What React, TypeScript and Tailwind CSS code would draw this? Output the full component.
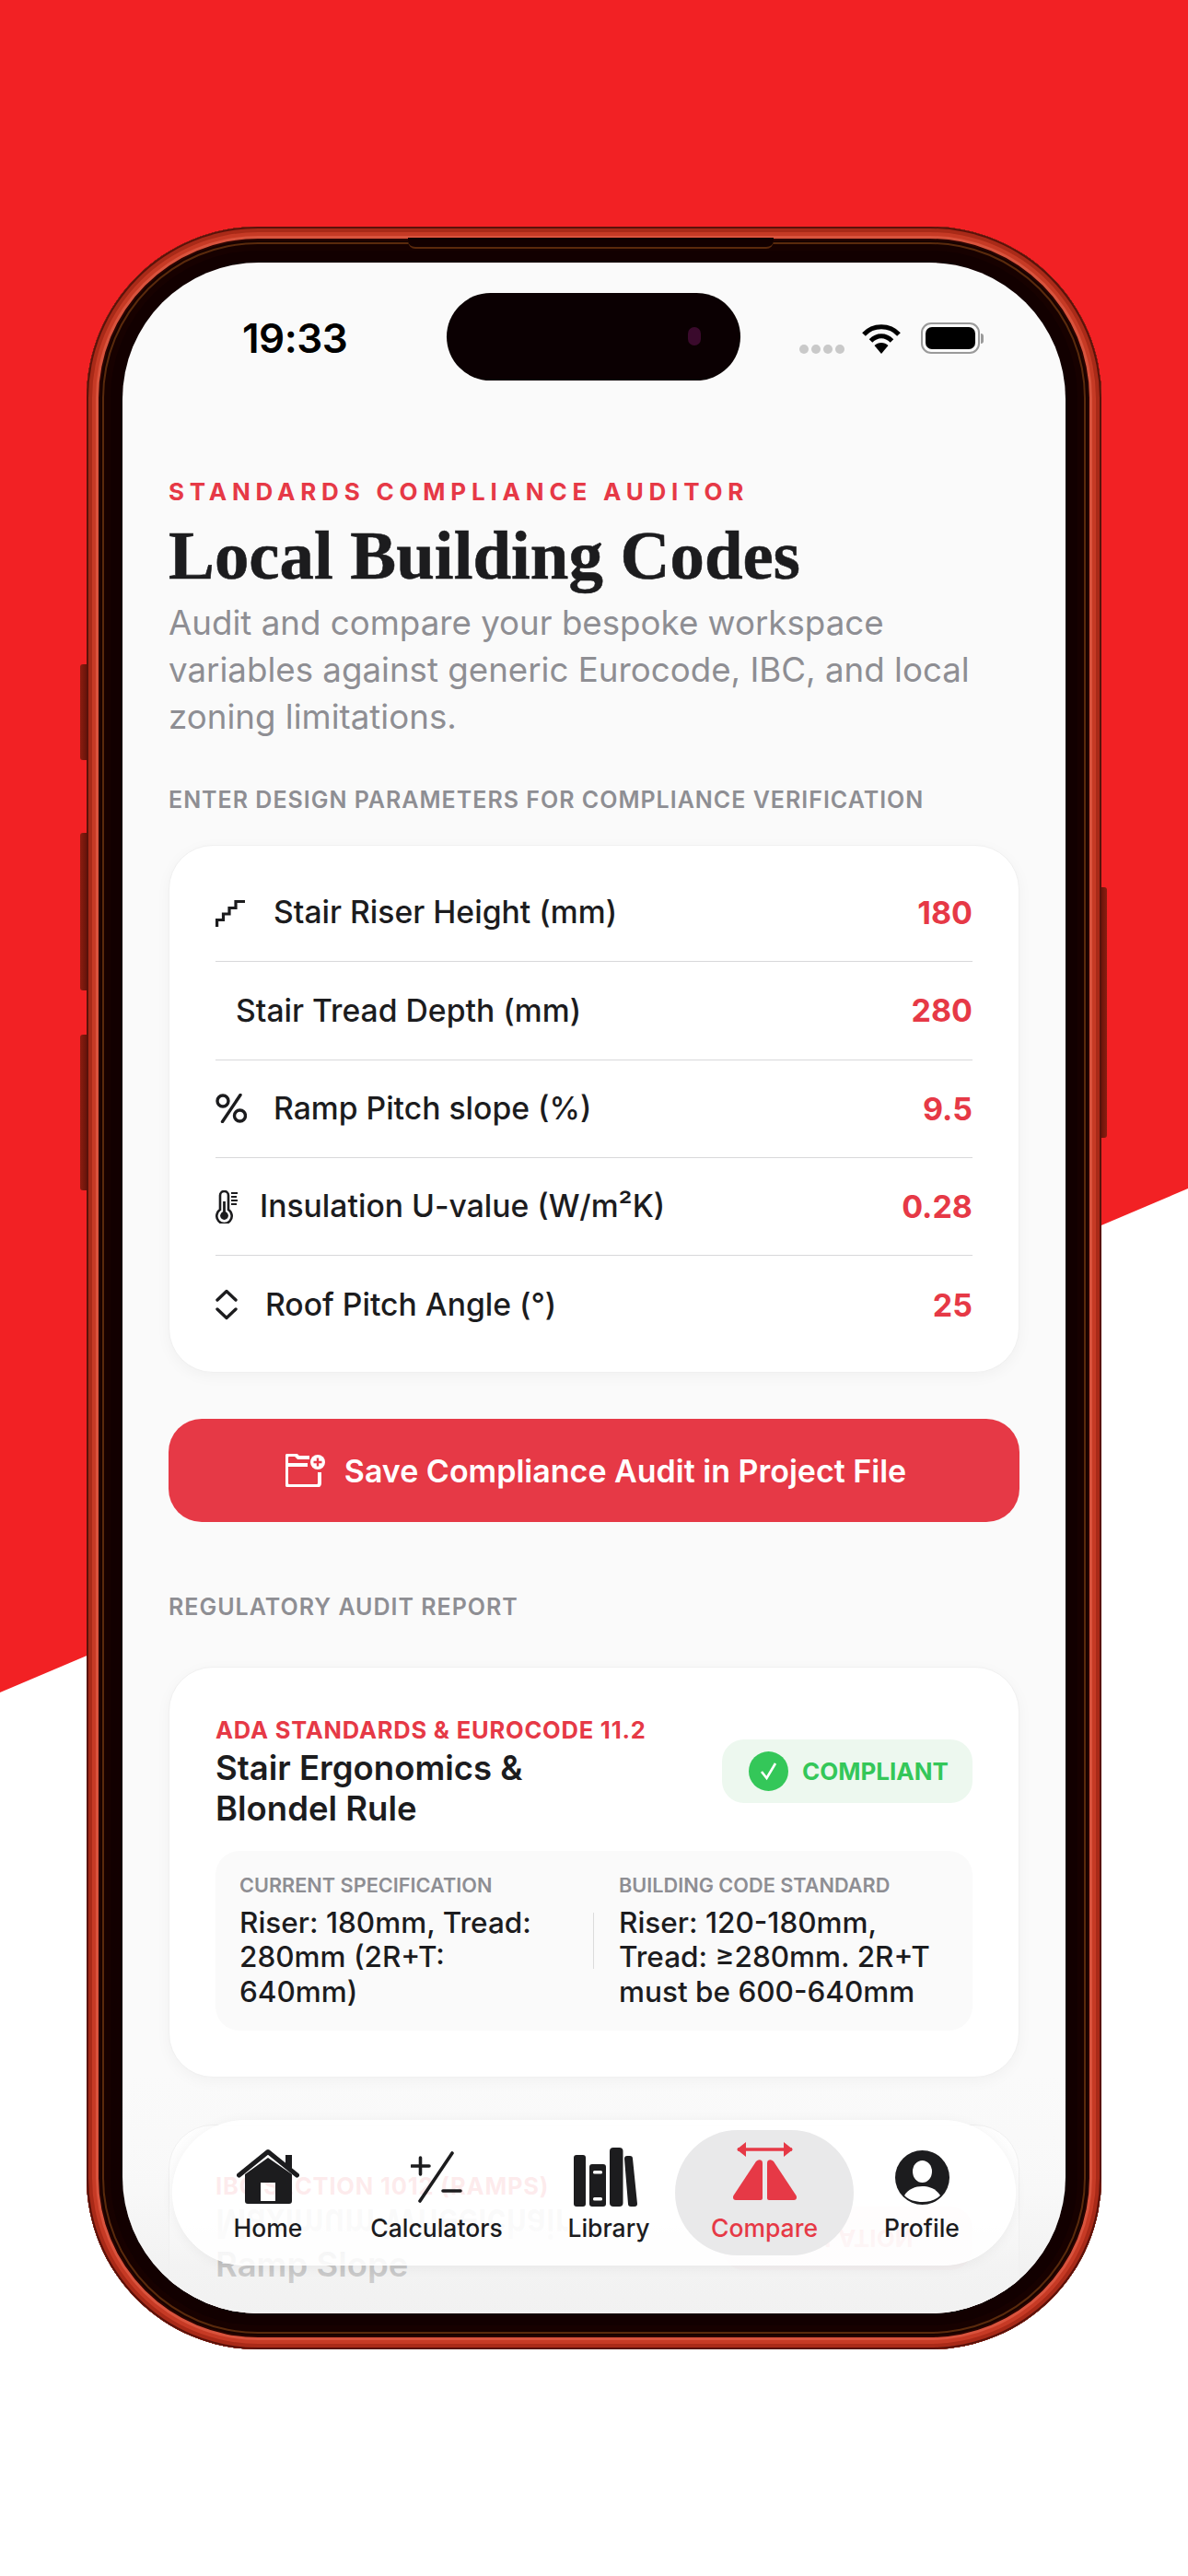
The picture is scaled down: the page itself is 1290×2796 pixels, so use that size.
import type { ReactNode } from "react";

const sans = "font-['Inter','Liberation_Sans',sans-serif]";

const params: { label: string; value: string; gap: string; icon: ReactNode }[] = [
  {
    label: "Stair Riser Height (mm)",
    value: "180",
    gap: "gap-[31px]",
    icon: (
      <svg width="32" height="32" viewBox="0 0 32 32" fill="none" stroke="#1c1c1e" strokeWidth="3.2">
        <path d="M1.6 31V23.5H8.5V17H15V10.5H22V3.5H32" />
      </svg>
    ),
  },
  { label: "Stair Tread Depth (mm)", value: "280", gap: "gap-[22px]", icon: <span /> },
  {
    label: "Ramp Pitch slope (%)",
    value: "9.5",
    gap: "gap-[29px]",
    icon: (
      <svg width="34" height="32" viewBox="0 0 34 32" fill="none" stroke="#1c1c1e" strokeWidth="3.4">
        <circle cx="8" cy="8" r="6" />
        <circle cx="26.5" cy="24" r="6" />
        <path d="M27 1.5 7.500 30.500" strokeLinecap="round" />
      </svg>
    ),
  },
  {
    label: "Insulation U-value (W/m²K)",
    value: "0.28",
    gap: "gap-[24px]",
    icon: (
      <svg width="24" height="36" viewBox="0 0 24 36" fill="none" stroke="#1c1c1e" strokeWidth="2.6">
        <path d="M5 21V5.500a4.500 4.500 0 0 1 9 0V21a8.200 8.200 0 1 1-9 0Z" />
        <circle cx="9.500" cy="27.500" r="4.400" fill="#1c1c1e" stroke="none" />
        <path d="M9.500 12v14" strokeWidth="2.800" />
        <path d="M17 3h7M17 7h6M17 11h7M17 15h6" strokeWidth="1.800" />
      </svg>
    ),
  },
  {
    label: "Roof Pitch Angle (°)",
    value: "25",
    gap: "gap-[30px]",
    icon: (
      <svg width="24" height="34" viewBox="0 0 24 34" fill="none" stroke="#1c1c1e" strokeWidth="3.4" strokeLinecap="round" strokeLinejoin="round">
        <path d="M2 12 12 2.500 22 12M2 22l10 9.500L22 22" />
      </svg>
    ),
  },
];

function HomeIcon() {
  return (
    <svg width="68" height="62" viewBox="0 0 68 62">
      <path d="M53 7h7v15l-7-5Z" fill="#1c1c1e" />
      <path d="M2.500 29 34 3.500 65.500 29" fill="none" stroke="#1c1c1e" strokeWidth="5" strokeLinecap="round" strokeLinejoin="round" />
      <path fillRule="evenodd" d="M9 28 34 10l26 18v29a3 3 0 0 1-3 3H12a3 3 0 0 1-3-3ZM26 37v20h16V37Z" fill="#1c1c1e" />
    </svg>
  );
}

function CalcIcon() {
  return (
    <svg width="56" height="58" viewBox="0 0 56 58" fill="none" stroke="#1c1c1e" strokeWidth="3.6" strokeLinecap="round">
      <path d="M1 17h19M10.500 8v18M45 3 10 55M35 44h19" />
    </svg>
  );
}

function LibraryIcon() {
  return (
    <svg className="-ml-[7px]" width="69" height="64" viewBox="0 0 69 64">
      <rect x="0" y="8" width="13" height="56" rx="3" fill="#1c1c1e" />
      <rect x="17" y="18" width="18" height="46" rx="3" fill="#1c1c1e" />
      <rect x="21" y="25" width="10" height="3.500" rx="1.500" fill="#ffffff" />
      <rect x="21" y="54" width="10" height="3.500" rx="1.500" fill="#ffffff" />
      <rect x="39" y="0" width="14.500" height="64" rx="4" fill="#1c1c1e" />
      <path d="M55 12a3 3 0 0 1 3-3h3a3 3 0 0 1 3 3l5 49a3 3 0 0 1-3 3h-4a3 3 0 0 1-3-3Z" fill="#1c1c1e" />
    </svg>
  );
}

function CompareIcon() {
  return (
    <svg className="-mt-[12px]" width="69" height="64" viewBox="0 0 69 64" fill="#e63946">
      <path d="M5 8h59" stroke="#e63946" strokeWidth="3.600" />
      <path d="M4 8 14 0v16ZM65 8 55 0v16Z" strokeLinejoin="round" />
      <path d="M25 21q3-3 6-1 1 1 1 3v38q0 2-2 2H3q-3 0-3-3 0-1 .5-2Z" />
      <path d="M44 21q-3-3-6-1-1 1-1 3v38q0 2 2 2h27q3 0 3-3 0-1-.5-2Z" />
    </svg>
  );
}

function ProfileIcon() {
  return (
    <svg width="59" height="59" viewBox="0 0 59 59">
      <circle cx="29.500" cy="29.500" r="29.500" fill="#1c1c1e" />
      <ellipse cx="29.500" cy="23" rx="10.500" ry="12" fill="#ffffff" />
      <path d="M10 49c4-7 12-10 19.500-10S45 42 49 49c-5 5-12 7-19.500 7S15 54 10 49Z" fill="#ffffff" />
    </svg>
  );
}

const tabs: { label: string; width: string; icon: ReactNode; active?: boolean }[] = [
  { label: "Home", width: "w-[136px]", icon: <HomeIcon /> },
  { label: "Calculators", width: "w-[230px]", icon: <CalcIcon /> },
  { label: "Library", width: "w-[144px]", icon: <LibraryIcon /> },
  { label: "Compare", width: "w-[194px]", icon: <CompareIcon />, active: true },
  { label: "Profile", width: "w-[148px]", icon: <ProfileIcon /> },
];

function StatusBar() {
  return (
    <div className="flex items-center justify-between h-[40px] mt-[62px] pl-[130px] pr-[89px]">
      <span className={`${sans} text-[44px] leading-[40px] font-semibold tracking-[-0.5px] text-black`}>19:33</span>
      <div className="flex items-center">
        <div className="flex gap-[3px] mt-[24px]">
          <span className="w-[10px] h-[10px] rounded-full bg-[#c9c9c9]" />
          <span className="w-[10px] h-[10px] rounded-full bg-[#c9c9c9]" />
          <span className="w-[10px] h-[10px] rounded-full bg-[#c9c9c9]" />
          <span className="w-[10px] h-[10px] rounded-full bg-[#c9c9c9]" />
        </div>
        <svg className="ml-[19px]" width="42" height="33" viewBox="0 0 42 33" fill="none" stroke="#000" strokeWidth="5">
          <path d="M2 12C12 1 30 1 40 12" />
          <path d="M9.500 19c7-7 16-7 23 0" />
          <path d="M21 33 13.500 24c4-4 11-4 15 0Z" fill="#000" stroke="none" />
        </svg>
        <div className="flex items-center ml-[22px]">
          <div className="w-[64px] h-[34px] rounded-[11px] border-2 border-[#9a9a9a] p-[3px]">
            <div className="w-full h-full rounded-[7px] bg-black" />
          </div>
          <span className="w-[3px] h-[11px] ml-[1px] rounded-r-full bg-[#9a9a9a]" />
        </div>
      </div>
    </div>
  );
}

function BottomNav() {
  return (
    <div className="absolute left-[54px] top-[2016px] w-[916px] h-[158px] rounded-[79px] bg-white/88 border border-white shadow-[0_2px_14px_rgba(0,0,0,0.05)] flex pl-[35px] pt-[10px] z-20">
      {tabs.map((tab) => (
        <div
          key={tab.label}
          className={`${tab.width} relative h-[136px] flex flex-col items-center pt-[18px] ${tab.active ? "rounded-[72px] bg-[#e9e9ea]" : ""}`}
        >
          <div className="h-[66px] flex items-center justify-center">{tab.icon}</div>
          <span className={`${sans} mt-[6px] text-[26.5px] leading-[32px] font-medium ${tab.active ? "text-[#e63946]" : "text-[#1c1c1e]"}`}>
            {tab.label}
          </span>
        </div>
      ))}
    </div>
  );
}

export default function App() {
  return (
    <div className="relative w-[1290px] h-[2796px] overflow-hidden bg-white">
      <div className="absolute inset-0 bg-[#f22124] [clip-path:polygon(0_0,100%_0,100%_1290px,0_1837px)]" />

      {/* Side buttons */}
      <div className="absolute left-[87px] top-[721px] w-[10px] h-[104px] rounded-l-[3px] bg-linear-to-r from-[#8c1d10] to-[#5a0f08]" />
      <div className="absolute left-[87px] top-[904px] w-[10px] h-[171px] rounded-l-[3px] bg-linear-to-r from-[#8c1d10] to-[#5a0f08]" />
      <div className="absolute left-[87px] top-[1123px] w-[10px] h-[169px] rounded-l-[3px] bg-linear-to-r from-[#8c1d10] to-[#5a0f08]" />
      <div className="absolute left-[1192px] top-[963px] w-[10px] h-[272px] rounded-r-[3px] bg-linear-to-l from-[#8c1d10] to-[#5a0f08]" />

      {/* Phone */}
      <div className="relative ml-[94px] mt-[246px] w-[1102px] h-[2304px] p-[39px] rounded-[186px] bg-[#120000] shadow-[inset_0_0_0_2px_#5a120a,inset_0_0_0_6px_#a92a18,inset_0_0_0_10px_#c63a25,inset_0_0_0_13px_#d9533d,inset_0_0_0_15px_#2a0500,inset_0_0_0_17px_#170200,inset_0_0_0_19px_#5a2a0c,inset_0_0_0_26px_#170100]">
        <div className="absolute left-[349px] top-[12px] w-[397px] h-[12px] rounded-b-[8px] bg-[#120000] border-b-2 border-[#5a2a0c]" />

        <div className="relative w-[1024px] h-[2226px] rounded-[148px] overflow-hidden bg-[#fafafa]">
          <div className="absolute left-[352px] top-[33px] w-[319px] h-[95px] rounded-full bg-[#0b0002] z-10">
            <span className="absolute left-[262px] top-[37px] w-[14px] h-[20px] rounded-full bg-[#3a0a2c]" />
          </div>

          <StatusBar />

          <div className={`${sans} px-[50px]`}>
            <p className="mt-[132px] text-[26px] leading-[30px] font-bold tracking-[5.8px] text-[#e63946] whitespace-nowrap">
              STANDARDS COMPLIANCE AUDITOR
            </p>
            <h1 className="mt-[14px] font-['Liberation_Serif',serif] text-[74.8px] leading-[80px] font-bold text-[#1c1c1e] [-webkit-text-stroke:0.6px_#1c1c1e]">
              Local Building Codes
            </h1>
            <p className="mt-[7px] text-[36.7px] leading-[51px] text-[#8e8e93]">
              Audit and compare your bespoke workspace variables against generic Eurocode, IBC, and local zoning limitations.
            </p>

            <p className="mt-[50px] text-[25px] leading-[30px] font-semibold tracking-[1px] text-[#8e8e93] whitespace-nowrap">
              ENTER DESIGN PARAMETERS FOR COMPLIANCE VERIFICATION
            </p>

            {/* Parameters card */}
            <div className="mt-[34px] pt-[20px] pb-[20px] px-[50px] rounded-[48px] bg-white border border-[#f0f0f0] shadow-[0_4px_16px_rgba(0,0,0,0.04)]">
              {params.map((row, i) => (
                <div
                  key={row.label}
                  className={`flex items-center justify-between h-[106.3px] ${i < params.length - 1 ? "border-b border-[#d8d8da]" : ""}`}
                >
                  <div className={`flex items-center ${row.gap}`}>
                    {row.icon}
                    <span className="text-[33.7px] font-medium text-[#1c1c1e]">{row.label}</span>
                  </div>
                  <span className="text-[34px] font-bold text-[#e63946]">{row.value}</span>
                </div>
              ))}
            </div>

            <button className="mt-[50px] w-full h-[112px] pl-[4px] rounded-[36px] bg-[#e63946] flex items-center justify-center gap-[20px] text-[34px] font-semibold text-white">
              <svg width="44" height="36" viewBox="0 0 44 36" fill="none" stroke="#fff" strokeWidth="4" strokeLinejoin="round">
                <path d="M26 4H14l-3-3H4a3 3 0 0 0-3 3v28a3 3 0 0 0 3 3h30a3 3 0 0 0 3-3V20" />
                <path d="M2 12h22" />
                <circle cx="35" cy="9" r="8" fill="#fff" stroke="none" />
                <path d="M35 4.500v9M30.500 9h9" stroke="#e63946" strokeWidth="2.400" />
              </svg>
              Save Compliance Audit in Project File
            </button>

            <p className="mt-[77px] text-[25px] leading-[30px] font-semibold tracking-[1px] text-[#8e8e93]">
              REGULATORY AUDIT REPORT
            </p>

            {/* Stair card */}
            <div className="mt-[50px] pt-[53px] pb-[50px] px-[50px] rounded-[48px] bg-white border border-[#f0f0f0] shadow-[0_4px_16px_rgba(0,0,0,0.04)]">
              <div className="flex items-center justify-between">
                <div>
                  <p className="text-[25.5px] leading-[30px] font-bold tracking-[0.8px] text-[#e63946]">ADA STANDARDS &amp; EUROCODE 11.2</p>
                  <p className="mt-[4px] text-[36.5px] leading-[44px] font-semibold text-[#1c1c1e]">
                    Stair Ergonomics &amp;
                    <br />
                    Blondel Rule
                  </p>
                </div>
                <div className="flex items-center gap-[15px] w-[272px] h-[69px] -mt-[3px] pl-[29px] rounded-[24px] bg-[#edf8ef]">
                  <svg width="43" height="43" viewBox="0 0 43 43">
                    <circle cx="21.500" cy="21.500" r="21.500" fill="#34c759" />
                    <path d="m14 22 5.500 7L29 13" fill="none" stroke="#fff" strokeWidth="2.600" />
                  </svg>
                  <span className="text-[26px] font-bold text-[#34c759]">COMPLIANT</span>
                </div>
              </div>

              <div className="mt-[24px] flex items-center h-[195px] pl-[26px] rounded-[26px] bg-[#fafafa]">
                <div className="w-[340px] mr-[20px]">
                  <p className="text-[21.7px] leading-[24px] font-semibold text-[#8e8e93] whitespace-nowrap">CURRENT SPECIFICATION</p>
                  <p className="mt-[10px] text-[31.5px] leading-[37.5px] font-medium text-[#1c1c1e]">
                    Riser: 180mm, Tread: 280mm (2R+T: 640mm)
                  </p>
                </div>
                <div className="w-px h-[61px] ml-[24px] bg-[#dcdcdc]" />
                <div className="w-[360px] ml-[27px]">
                  <p className="text-[21.7px] leading-[24px] font-semibold text-[#8e8e93] whitespace-nowrap">BUILDING CODE STANDARD</p>
                  <p className="mt-[10px] text-[31.5px] leading-[37.5px] font-medium text-[#1c1c1e]">
                    Riser: 120-180mm, Tread: ≥280mm. 2R+T must be 600-640mm
                  </p>
                </div>
              </div>
            </div>

            {/* Ramp card, runs under the tab bar */}
            <div className="mt-[51px] h-[420px] pt-[51px] px-[50px] rounded-[48px] bg-white border border-[#f0f0f0]">
              <div className="flex items-center justify-between">
                <div>
                  <p className="text-[25.5px] leading-[30px] font-bold tracking-[0.8px] text-[#e63946]">IBC SECTION 1012 (RAMPS)</p>
                  <p className="mt-[4px] text-[36.5px] leading-[44px] font-semibold text-[#1c1c1e]">
                    <span className="block origin-center text-[#1c1c1e]/30 [transform:scaleY(-1.2)]">Maximum Wheelchair</span>
                    Ramp Slope
                  </p>
                </div>
                <div className="flex items-center justify-center w-[272px] h-[69px] mt-[20px] rounded-[24px] bg-[#fdecee]">
                  <span className="block text-[26px] font-bold text-[#e63946] [transform:scaleY(-1)]">VIOLATION</span>
                </div>
              </div>
            </div>
          </div>

          <div className="absolute inset-x-0 bottom-0 h-[260px] bg-[linear-gradient(to_bottom,#f0f0f000,#f0f0f033_50%,#f0f0f0cc_80%,#f0f0f0e6)] z-10" />
          <BottomNav />
        </div>
      </div>
    </div>
  );
}
